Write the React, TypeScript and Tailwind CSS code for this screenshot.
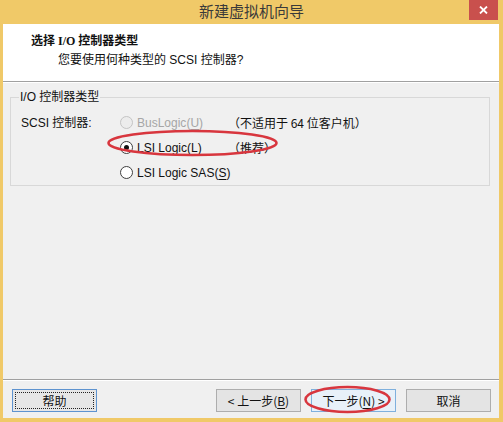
import React from "react";

const ui = { fontFamily: '"Liberation Sans", "Noto Sans CJK SC", sans-serif' };
const cjk = { fontFamily: '"Noto Sans CJK SC", "Liberation Sans", sans-serif' };

function Radio({ state }: { state: "disabled" | "checked" | "off" }) {
  if (state === "disabled") {
    return <span className="w-[13px] h-[13px] rounded-full border border-[#c4c4c4] bg-[#ececec] shrink-0" />;
  }
  return (
    <span className="w-[13px] h-[13px] rounded-full border border-[#3f3f3f] bg-white shrink-0 flex items-center justify-center">
      {state === "checked" && <span className="w-[5px] h-[5px] rounded-full bg-[#111]" />}
    </span>
  );
}

function Option({
  label,
  keyChar,
  state,
  note,
}: {
  label: string;
  keyChar: string;
  state: "disabled" | "checked" | "off";
  note?: string;
}) {
  const color = state === "disabled" ? "text-[#a6a6a6]" : "text-[#111]";
  return (
    <div className="flex items-center h-[25px]">
      <div className="flex items-center gap-[4px] w-[108px]">
        <Radio state={state} />
        <span className={`${color} whitespace-nowrap`}>
          {label}(<u className="underline-offset-2">{keyChar}</u>)
        </span>
      </div>
      {note && <span className="text-[#111] whitespace-nowrap" style={cjk}>{note}</span>}
    </div>
  );
}

function Button({ children, variant }: { children: React.ReactNode; variant?: "focus" | "default" }) {
  if (variant === "focus") {
    return (
      <div className="w-[85px] h-[23px] border border-[#5e93cf] bg-[#e6e6e6] p-[2px]">
        <div className="w-full h-full border border-dotted border-[#222] flex items-center justify-center text-[#111]">
          {children}
        </div>
      </div>
    );
  }
  return (
    <div
      className={`w-[85px] h-[23px] border flex items-center justify-center text-[#111] ${
        variant === "default" ? "border-[#7fb0dd] bg-[#e8f1f9]" : "border-[#adadad] bg-[#e4e4e4]"
      }`}
    >
      {children}
    </div>
  );
}

export default function App() {
  return (
    <div className="relative w-[503px] h-[422px] bg-[#f0c968] flex flex-col text-[12px] select-none" style={ui}>
      {/* Title bar */}
      <div className="relative h-[24px] flex items-center justify-center shrink-0">
        <span className="text-[15px] text-[#3a3a3a] leading-none -mt-[3px]" style={cjk}>
          新建虚拟机向导
        </span>
        <div className="absolute right-[5px] top-0 w-[29px] h-[20px] bg-[#c9504d] flex items-center justify-center">
          <svg width="9" height="8" viewBox="0 0 9 8">
            <path d="M1 0.5 L8 7.5 M8 0.5 L1 7.5" stroke="#fff" strokeWidth="1.8" />
          </svg>
        </div>
      </div>

      {/* Client area */}
      <div className="flex-1 ml-[3px] mr-[4px] mb-[4px] flex flex-col bg-[#f0f0f0]">
        {/* Header */}
        <div className="h-[58px] bg-white border-b border-[#a0a0a0] shrink-0 pl-[28px] pt-[8px]">
          <div className="font-bold text-[12px] text-[#111] leading-[18px]" style={{ fontFamily: '"Liberation Serif", "Noto Sans CJK SC", serif' }}>
            选择 I/O 控制器类型
          </div>
          <div className="pl-[27px] mt-[1px] leading-[18px] text-[#111]">
            您要使用何种类型的 SCSI 控制器?
          </div>
        </div>

        {/* Body */}
        <div className="flex-1 flex flex-col border-t border-white">
          <fieldset className="mt-[6px] ml-[7px] mr-[9px] border border-[#d8d8d8] pl-[10px] pt-[5px] pb-0">
            <legend className="-ml-[2px] px-[1px] leading-[16px] text-[#111]">I/O 控制器类型</legend>
            <div className="flex">
              <div className="w-[99px] h-[25px] flex items-center text-[#111] whitespace-nowrap">SCSI 控制器:</div>
              <div className="flex flex-col">
                <Option label="BusLogic" keyChar="U" state="disabled" note="（不适用于 64 位客户机）" />
                <Option label="LSI Logic" keyChar="L" state="checked" note="（推荐）" />
                <Option label="LSI Logic SAS" keyChar="S" state="off" />
              </div>
            </div>
          </fieldset>

          <div className="flex-1" />

          {/* Footer */}
          <div className="border-t border-[#a0a0a0] shadow-[inset_0_1px_0_#ffffff] pt-[9px] pb-[6px] pl-[9px] pr-[8px] flex items-center">
            <Button variant="focus"><span style={cjk}>帮助</span></Button>
            <div className="flex-1" />
            <div className="flex gap-[10px]">
              <Button>
                <span style={cjk}>&lt; 上一步(<u className="underline-offset-2">B</u>)</span>
              </Button>
              <Button variant="default">
                <span style={cjk}>下一步(<u className="underline-offset-2">N</u>) &gt;</span>
              </Button>
              <Button><span style={cjk}>取消</span></Button>
            </div>
          </div>
        </div>
      </div>

      {/* Red annotation marks */}
      <svg className="absolute inset-0 pointer-events-none" width="503" height="422">
        <ellipse cx="192.5" cy="143" rx="84" ry="12" fill="none" stroke="#d8363e" strokeWidth="2.6" />
        <ellipse cx="347.5" cy="399.5" rx="42" ry="12.5" fill="none" stroke="#d8363e" strokeWidth="2.6" />
      </svg>
    </div>
  );
}
